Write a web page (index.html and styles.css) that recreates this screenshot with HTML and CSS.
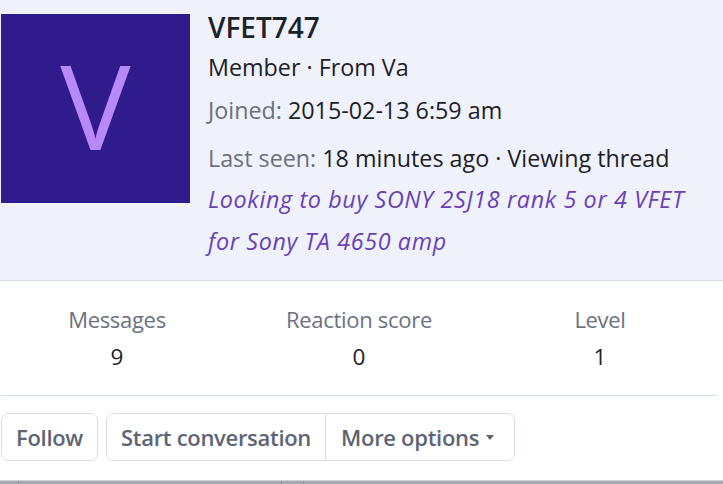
FILE: index.html
```html
<!DOCTYPE html>
<html>
<head>
<meta charset="utf-8">
<link rel="stylesheet" href="styles.css">
</head>
<body>
<div class="card">
  <header class="head">
    <div class="avatar"><span>V</span></div>
    <div class="info">
      <h1 class="name">VFET747</h1>
      <div class="line member">Member · From Va</div>
      <div class="line joined"><span class="muted">Joined:</span> 2015-02-13 6:59 am</div>
      <div class="line seen"><span class="muted">Last seen:</span> 18 minutes ago · Viewing thread</div>
      <div class="status">Looking to buy SONY 2SJ18 rank 5 or 4 VFET for Sony TA 4650 amp</div>
    </div>
  </header>
  <section class="stats">
    <div class="stat"><div class="label">Messages</div><div class="value">9</div></div>
    <div class="stat"><div class="label">Reaction score</div><div class="value">0</div></div>
    <div class="stat"><div class="label">Level</div><div class="value">1</div></div>
  </section>
  <div class="actions">
    <button class="btn">Follow</button>
    <div class="group">
      <button class="btn gbtn">Start conversation</button>
      <button class="btn gbtn more">More options <span class="caret"></span></button>
    </div>
  </div>
</div>
<div class="bottombar"><span class="seg s1"></span><span class="seg s2"></span><span class="seg s3"></span></div>
</body>
</html>
```

FILE: styles.css
```css
html, body {
  margin: 0;
  padding: 0;
  background: #fff;
}
body {
  font-family: "Open Sans", "Noto Sans", "Liberation Sans", sans-serif;
  color: #1d2129;
  width: 723px;
  height: 484px;
  overflow: hidden;
  position: relative;
}
.card {
  width: 723px;
}
.head {
  display: flex;
  background: #eff2fa;
  border-bottom: 1px solid #d3dcea;
  padding: 14px 0 0 1px;
  height: 266px;
}
.avatar {
  width: 189px;
  height: 189px;
  background: #2f1b8b;
  display: flex;
  align-items: center;
  justify-content: center;
  flex: none;
}
.avatar span {
  color: #b98af7;
  font-size: 118px;
  line-height: 1;
  font-weight: 400;
  margin-top: -7px;
}
.info {
  margin-left: 18px;
}
.name {
  margin: 0;
  font-size: 28px;
  font-weight: 600;
  line-height: 26px;
  color: #1d2129;
}
.line {
  font-size: 23.3px;
  line-height: 30px;
}
.line.member { margin-top: 12px; }
.line.joined { margin-top: 13px; }
.line.seen { margin-top: 18px; }
.muted { color: #6b7080; }
.status {
  font-style: italic;
  color: #6a41b6;
  font-size: 23.3px;
  line-height: 42px;
  margin-top: 5px;
  width: 490px;
  letter-spacing: 0.65px;
}
.stats {
  display: grid;
  grid-template-columns: 232px 252px 230px;
  box-sizing: border-box;
  height: 115px;
  padding-top: 24px;
  margin: 0 6px 0 1px;
  border-bottom: 1px solid #d3dcea;
}
.stat {
  text-align: center;
}
.label {
  color: #6b7181;
  font-size: 22px;
  line-height: 28px;
  letter-spacing: -0.3px;
}
.value {
  font-size: 22.5px;
  line-height: 28px;
  margin-top: 10px;
  color: #1d2129;
}
.actions {
  display: flex;
  gap: 8px;
  padding: 17px 0 0 1px;
}
.btn {
  font-family: inherit;
  font-size: 22px;
  font-weight: 600;
  color: #5d6474;
  background: #fff;
  border: 1px solid #d8dfea;
  border-radius: 7px;
  height: 48px;
  padding: 0 14px;
  letter-spacing: -0.3px;
  display: flex;
  align-items: center;
}
.group {
  display: flex;
  border: 1px solid #d8dfea;
  border-radius: 7px;
}
.gbtn {
  border: none;
  border-radius: 0;
  background: transparent;
  height: 46px;
  padding: 0 14px;
}
.gbtn + .gbtn {
  border-left: 1px solid #d8dfea;
}
.more {
  padding-left: 15px;
  padding-right: 20px;
}
.caret {
  display: inline-block;
  width: 0;
  height: 0;
  border-left: 4px solid transparent;
  border-right: 4px solid transparent;
  border-top: 5px solid #5d6474;
  margin-left: 7px;
}
.bottombar {
  position: absolute;
  left: 0;
  right: 0;
  bottom: 0;
  height: 3px;
  background: #a9aaad;
  border-top: 1px solid #cdd3dc;
}
.seg {
  position: absolute;
  top: 0;
  width: 1px;
  height: 3px;
  background: #8e8f92;
}
.s1 { left: 18px; }
.s2 { left: 281px; }
.s3 { left: 303px; }
```
